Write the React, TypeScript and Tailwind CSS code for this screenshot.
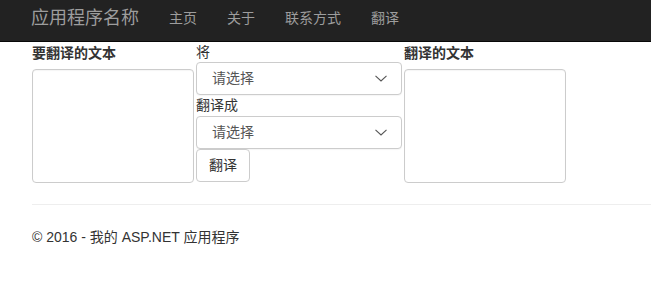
import React from 'react';

const navItems = ['主页', '关于', '联系方式', '翻译'];

function Chevron() {
  return (
    <svg width="12" height="7" viewBox="0 0 12 7" className="shrink-0">
      <polyline points="0.5,0.8 6,6 11.5,0.8" fill="none" stroke="#555" strokeWidth="1.1" />
    </svg>
  );
}

function SelectBox() {
  return (
    <div className="h-[33px] w-[206px] border border-[#ccc] rounded-[4px] bg-white flex items-center justify-between pl-[15px] pr-[14px] text-[14px] text-[#555] shadow-[0_1px_1px_rgba(0,0,0,0.04)]">
      <span>请选择</span>
      <Chevron />
    </div>
  );
}

export default function App() {
  return (
    <div className="min-h-[290px] w-full bg-white text-[#333] text-[14px] font-['Liberation_Sans','Noto_Sans_CJK_SC',sans-serif]">
      <nav className="h-[42px] bg-[#222] border-b border-[#080808] flex items-center pl-[31px]">
        <span className="text-[18px] text-[#9d9d9d] leading-none mb-[6px]">应用程序名称</span>
        <ul className="flex items-center gap-[30px] ml-[30px] mb-[5px]">
          {navItems.map((item) => (
            <li key={item} className="text-[14px] text-[#9d9d9d] leading-none">
              {item}
            </li>
          ))}
        </ul>
      </nav>

      <div className="flex gap-[2px] pl-[32px]">
        <div className="w-[162px]">
          <div className="font-bold leading-5 mb-[6px] pt-[1px]">要翻译的文本</div>
          <div className="h-[114px] border border-[#ccc] rounded-[4px] bg-white shadow-[inset_0_1px_1px_rgba(0,0,0,0.04)]" />
        </div>

        <div className="w-[206px]">
          <div className="leading-5">将</div>
          <SelectBox />
          <div className="leading-[21px]">翻译成</div>
          <SelectBox />
          <button className="h-[33px] px-3 border border-[#ccc] rounded-[4px] bg-white text-[14px] text-[#333]">
            翻译
          </button>
        </div>

        <div className="w-[162px]">
          <div className="font-bold leading-5 mb-[6px] pt-[1px]">翻译的文本</div>
          <div className="h-[114px] border border-[#ccc] rounded-[4px] bg-white shadow-[inset_0_1px_1px_rgba(0,0,0,0.04)]" />
        </div>
      </div>

      <div className="pl-[32px] mt-[21px]">
        <div className="h-px bg-[#eee]" />
        <footer className="pt-[22px] leading-5">© 2016 - 我的 ASP.NET 应用程序</footer>
      </div>
    </div>
  );
}
